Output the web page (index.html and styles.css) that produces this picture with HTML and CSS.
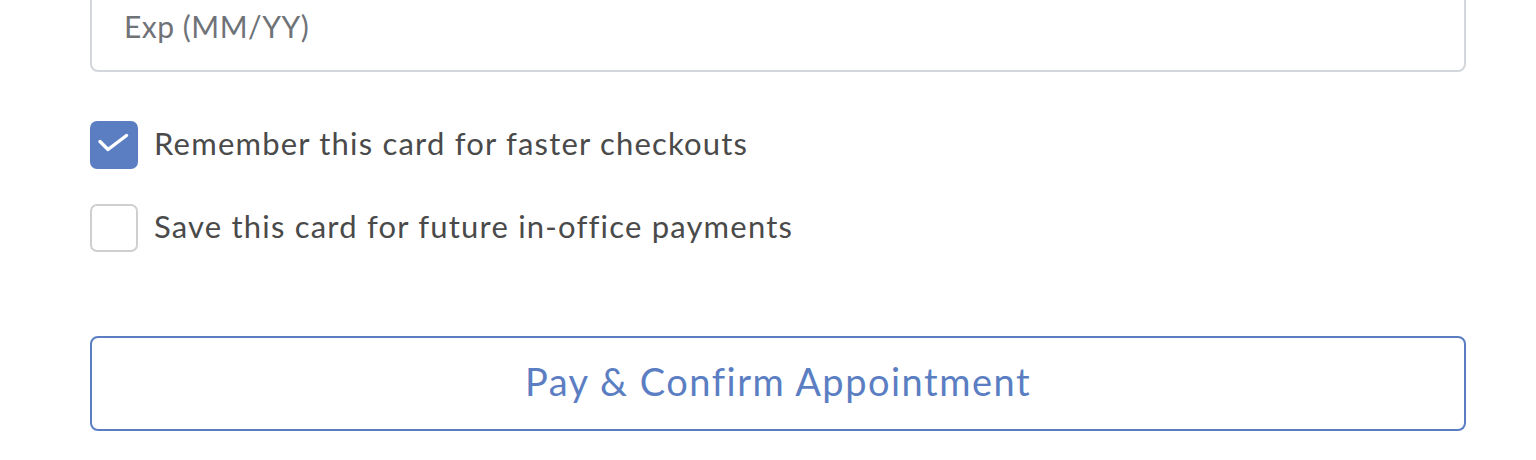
FILE: index.html
```html
<!DOCTYPE html>
<html>
<head>
<meta charset="utf-8"/>
<link rel="stylesheet" href="styles.css">
<title>Pay</title>
</head>
<body>
<div class="payform">
  <div class="fld">
    <input class="fldin" type="text" placeholder="Exp (MM/YY)">
  </div>

  <label class="chk">
    <span class="chkbox on">
      <svg width="44" height="44" viewBox="2 2 44 44"><path d="M10 20.5 L18 28.5 L36.5 14.5" fill="none" stroke="#fff" stroke-width="3.4" stroke-linecap="round" stroke-linejoin="round"/></svg>
    </span>
    <span class="chktx">Remember this card for faster checkouts</span>
  </label>
  <label class="chk">
    <span class="chkbox"></span>
    <span class="chktx">Save this card for future in-office payments</span>
  </label>

  <button class="paybtn">Pay &amp; Confirm Appointment</button>
</div>
</body>
</html>
```

FILE: styles.css
```css
html,body{margin:0;padding:0;background:#fff;}
body{font-family:Lato,"Noto Sans",sans-serif;color:#4a4a4a;}

/** payform **/
.payform{width:1376px;margin:0 0 0 90px;display:flex;flex-direction:column;}
.fld{margin-top:-24px;}
.fldin{box-sizing:border-box;width:100%;height:96px;padding:4px 32px 0;
border:2px solid #d3d6db;border-radius:8px;outline:none;
font-family:inherit;font-size:30px;letter-spacing:0.5px;color:#4a4a4a;}
.fldin::placeholder{color:#6f7378;}

.chk{display:flex;align-items:center;gap:16px;cursor:pointer;}
.chk:first-of-type{margin-top:49px;}
.chk + .chk{margin-top:35px;}
.chkbox{box-sizing:border-box;flex:none;width:48px;height:48px;border:2px solid #cfcfcf;border-radius:7px;
display:flex;align-items:center;justify-content:center;}
.chkbox.on{background:#5b7ec3;border-color:#5b7ec3;}
.chkbox svg{display:block;}
.chktx{font-size:31px;letter-spacing:1.2px;padding-bottom:5px;}

.paybtn{box-sizing:border-box;margin-top:84px;height:95px;width:100%;padding:0 0 6px;
background:#fff;border:2px solid #5b7ec3;border-radius:8px;cursor:pointer;
font-family:inherit;font-size:38px;letter-spacing:1.5px;color:#5b7ec3;}
```
